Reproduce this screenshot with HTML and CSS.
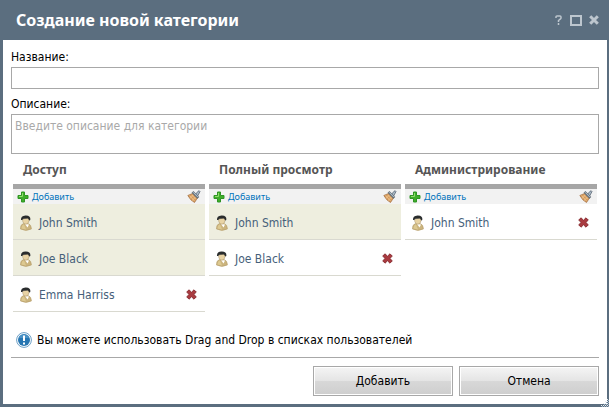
FILE: index.html
```html
<!DOCTYPE html>
<html lang="ru">
<head>
<meta charset="utf-8">
<title>Создание новой категории</title>
<link rel="stylesheet" href="styles.css">
</head>
<body>
<svg class="sprites" aria-hidden="true">
  <symbol id="plus" viewBox="0 0 12 12">
    <path d="M4.500 1h3v3.500H11v3H7.500V11h-3V7.500H1v-3h3.500z" fill="#3fae2a" stroke="#2f9424"/>
    <path d="M5.500 2v3.500H2" fill="none" stroke="#8fdc6c"/>
  </symbol>
  <symbol id="brush" viewBox="0 0 14 13">
    <path d="M8 5l3-3.700q1.500-1.100 2 .3L10.300 6.500z" fill="#a9bac8" stroke="#66727e" stroke-width=".9"/>
    <path d="M.8 5.500L5.500 3.500l5 4.500L7.500 12.500Q3.500 10.500.8 5.500z" fill="#d69a5c" stroke="#a06f42" stroke-width=".7"/>
    <path d="M2.500 5.500l5 5.500M4.500 4.800l4.500 4.500M3 8.300l3.500-3.300M5 10.500l3.500-3.300" stroke="#f0c890" stroke-width=".8"/>
    <path d="M5.500 1.800l5.800 6" stroke="#65707a" stroke-width="2.600"/>
    <path d="M6.200 2.300l4.600 4.700" stroke="#b9c9d3" stroke-width="1"/>
  </symbol>
  <symbol id="person" viewBox="0 0 12 16">
    <path d="M.5 14Q.2 9.500 3.500 8.500h4.500q3.400 1 3.400 5.500Q6 16.800.5 14z" fill="#cbb47e" stroke="#b39b67" stroke-width=".6"/>
    <path d="M1.500 13.500Q1.500 10 4 9.500l2 5z" fill="#ddc991"/>
    <path d="M5 9l2.500 3.500L9 9.500z" fill="#fff"/>
    <path d="M2.500 4.500q.2 4.500 3.500 4.700 3-.4 3.300-4.700L7 2.500z" fill="#e8d3a4" stroke="#98805a" stroke-width=".4"/>
    <path d="M1 5Q.6.800 5.500.500q5.500-.2 4.800 4.500L9.300 5.500 8 3.500 3.500 3.800 2 5z" fill="#292c2d"/>
  </symbol>
  <symbol id="cross" viewBox="0 0 11 11">
    <path d="M3 .8L5.500 3.200 8 .8l2.300 2.300L7.800 5.500l2.500 2.300L8 10.200 5.500 7.800 3 10.200.7 7.800l2.500-2.300L.7 3.100z" fill="#a93b40" stroke="#86292e" stroke-width=".9"/>
  </symbol>
</svg>
<main class="dialog">
  <header class="titlebar">
    <h1>Создание новой категории</h1>
    <div class="window-buttons">
      <button type="button" aria-label="Справка"><svg width="8" height="10" viewBox="0 0 8 10"><path d="M1 3V1.800Q1 1 2 1h3q1 0 1 1v1q0 .7-.8 1.200L3.500 5.500V7M3.500 8v2" fill="none" stroke="#bdc6ce" stroke-width="1.500"/></svg></button>
      <button type="button" aria-label="Развернуть"><svg width="12" height="11" viewBox="0 0 12 11"><path d="M1 1h10v9H1z" fill="none" stroke="#bdc6ce" stroke-width="2"/></svg></button>
      <button type="button" aria-label="Закрыть"><svg width="10" height="10" viewBox="0 0 10 10"><path d="M1.200 1.200l7.600 7.600M8.800 1.200L1.200 8.800" stroke="#bdc6ce" stroke-width="3"/></svg></button>
    </div>
  </header>
  <form class="content">
    <label for="name">Название:</label>
    <input id="name" class="field" type="text">
    <label for="description">Описание:</label>
    <textarea id="description" class="field" placeholder="Введите описание для категории"></textarea>
    <div class="columns">
      <section>
        <h2>Доступ</h2>
        <div class="tools">
          <button type="button" class="add"><svg width="12" height="12"><use href="#plus"/></svg>Добавить</button>
          <button type="button" aria-label="Очистить"><svg width="14" height="13"><use href="#brush"/></svg></button>
        </div>
        <ul>
          <li class="inherited"><svg width="12" height="16"><use href="#person"/></svg><span>John Smith</span></li>
          <li class="inherited"><svg width="12" height="16"><use href="#person"/></svg><span>Joe Black</span></li>
          <li><svg width="12" height="16"><use href="#person"/></svg><span>Emma Harriss</span><button type="button" aria-label="Удалить"><svg width="11" height="11"><use href="#cross"/></svg></button></li>
        </ul>
      </section>
      <section>
        <h2>Полный просмотр</h2>
        <div class="tools">
          <button type="button" class="add"><svg width="12" height="12"><use href="#plus"/></svg>Добавить</button>
          <button type="button" aria-label="Очистить"><svg width="14" height="13"><use href="#brush"/></svg></button>
        </div>
        <ul>
          <li class="inherited"><svg width="12" height="16"><use href="#person"/></svg><span>John Smith</span></li>
          <li><svg width="12" height="16"><use href="#person"/></svg><span>Joe Black</span><button type="button" aria-label="Удалить"><svg width="11" height="11"><use href="#cross"/></svg></button></li>
        </ul>
      </section>
      <section>
        <h2>Администрирование</h2>
        <div class="tools">
          <button type="button" class="add"><svg width="12" height="12"><use href="#plus"/></svg>Добавить</button>
          <button type="button" aria-label="Очистить"><svg width="14" height="13"><use href="#brush"/></svg></button>
        </div>
        <ul>
          <li><svg width="12" height="16"><use href="#person"/></svg><span>John Smith</span><button type="button" aria-label="Удалить"><svg width="11" height="11"><use href="#cross"/></svg></button></li>
        </ul>
      </section>
    </div>
    <p class="hint">
      <svg width="16" height="16" viewBox="0 0 16 16"><circle cx="8" cy="8" r="7.400" fill="#fff" stroke="#6b9fc6"/><circle cx="8" cy="8" r="6" fill="#2676b2"/><path d="M3 6a5.300 5.300 0 0 1 10 0z" fill="#4a92c6"/><path d="M7 3.500h2V9H7zM7 10.500h2v2H7z" fill="#fff"/></svg>
      Вы можете использовать Drag and Drop в списках пользователей
    </p>
    <footer>
      <button type="submit">Добавить</button>
      <button type="button">Отмена</button>
    </footer>
  </form>
  <svg class="grip" width="8" height="8" viewBox="0 0 8 8" aria-hidden="true"><path d="M6 0h1v1H6zM4 2h1v1H4zM6 2h1v1H6zM2 4h1v1H2zM4 4h1v1H4zM6 4h1v1H6zM0 6h1v1H0zM2 6h1v1H2zM4 6h1v1H4zM6 6h1v1H6z" fill="#e4ecf2"/><path d="M7 1h1v1H7zM5 3h1v1H5zM7 3h1v1H7zM3 5h1v1H3zM5 5h1v1H5zM7 5h1v1H7zM1 7h1v1H1zM3 7h1v1H3zM5 7h1v1H5zM7 7h1v1H7z" fill="#9fb3c6"/></svg>
</main>
</body>
</html>
```
FILE: styles.css
```css
* {
  box-sizing: border-box;
}

body {
  margin: 0;
  font: 12px/16px "DejaVu Sans Condensed", "Noto Sans", sans-serif;
  color: #000;
}

svg {
  display: block;
  flex: none;
}

.sprites {
  position: absolute;
  width: 0;
  height: 0;
}

button {
  margin: 0;
  padding: 0;
  border: 0;
  background: none;
  font: inherit;
  color: inherit;
}

.dialog {
  position: relative;
  display: flex;
  flex-direction: column;
  min-height: 100vh;
  padding: 0 2px 3px 3px;
  background: #5b6e7f;
}

.titlebar {
  display: flex;
  align-items: center;
  justify-content: space-between;
  height: 40px;
  padding: 0 8px 0 13px;
}

h1 {
  margin: 0;
  font: bold 16px/20px "Noto Sans", sans-serif;
  color: #fff;
}

.window-buttons {
  display: flex;
  align-items: center;
  gap: 7px;
}

.content {
  flex: 1;
  display: flex;
  flex-direction: column;
  padding: 8px;
  background: #fff;
}

.content > label {
  height: 19px;
  line-height: 18px;
}

.field {
  display: block;
  width: 100%;
  height: 22px;
  margin: 0 0 6px;
  padding: 3px;
  border: 1px solid #a8a8a8;
  border-radius: 0;
  background: #fff;
  font: inherit;
  resize: none;
}

textarea.field {
  height: 40px;
  margin: 0;
}

.field::placeholder {
  color: #a9a9a9;
  opacity: 1;
}

.columns {
  display: grid;
  grid-template-columns: repeat(3, 1fr);
  gap: 4px;
  min-height: 174px;
  padding: 0 2px;
}

h2 {
  margin: 0;
  height: 35px;
  padding: 7px 10px 0;
  border-bottom: 5px solid #a6a6a6;
  font: bold 12px/18px "Noto Sans", sans-serif;
  color: #555;
}

.tools {
  display: flex;
  align-items: center;
  justify-content: space-between;
  height: 15px;
  padding: 0 4px;
  background: #f2f2f2;
}

.add {
  display: flex;
  align-items: center;
  gap: 3px;
  font: 9px/12px "Noto Sans", sans-serif;
  color: #0072bc;
}

ul {
  margin: 0;
  padding: 0;
  list-style: none;
}

li {
  display: flex;
  align-items: center;
  gap: 7px;
  height: 36px;
  padding: 2px 8px 0 7px;
  border-bottom: 1px solid #d9d9d0;
  color: #46607a;
}

li span {
  flex: 1;
}

.inherited {
  background: #eeeedf;
}

.hint {
  display: flex;
  align-items: center;
  gap: 5px;
  height: 30px;
  margin: 0;
  padding: 0 5px 6px;
  border-bottom: 1px solid #a8a8a8;
}

footer {
  display: flex;
  justify-content: flex-end;
  gap: 6px;
  padding-top: 8px;
}

footer button {
  width: 140px;
  height: 30px;
  border: 1px solid #a8a8a8;
  background: linear-gradient(#f5f5f5, #e4e4e4 50%, #d8d8d8 50%, #cecece);
  box-shadow: inset 0 0 0 1px #fff;
}

.grip {
  position: absolute;
  right: 0;
  bottom: 0;
}
```
